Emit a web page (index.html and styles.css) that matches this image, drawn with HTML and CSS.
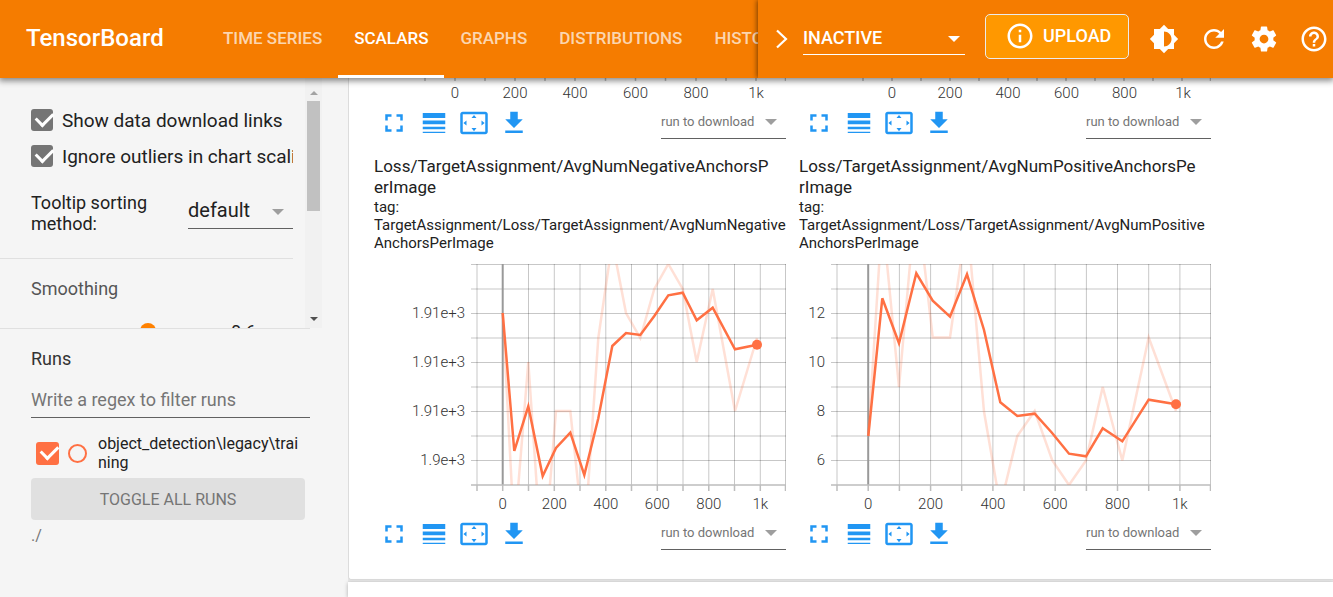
FILE: index.html
```html
<!DOCTYPE html>
<html lang="en">
<head>
<meta charset="utf-8">
<title>TensorBoard</title>
<link rel="stylesheet" href="styles.css">
</head>
<body>
<svg class="defs" aria-hidden="true">
  <symbol id="i-full" viewBox="0 0 24 24"><path d="M7 14H5v5h5v-2H7v-3zm-2-4h2V7h3V5H5v5zm12 7h-3v2h5v-5h-2v3zM14 5v2h3v3h2V5h-5z"/></symbol>
  <symbol id="i-lines" viewBox="0 0 24 24"><path d="M3 17h18v-2H3v2zm0 3h18v-1H3v1zm0-7h18v-3H3v3zm0-9v4h18V4H3z"/></symbol>
  <symbol id="i-fit" viewBox="0 0 24 24"><path d="M12.01 5.5L10 8h4l-1.99-2.5zM18 10v4l2.5-1.99L18 10zM6 10l-2.5 2.01L6 14v-4zm8 6h-4l2.01 2.5L14 16zm7-13H3c-1.1 0-2 .9-2 2v14c0 1.1.9 2 2 2h18c1.1 0 2-.9 2-2V5c0-1.1-.9-2-2-2zm0 16.01H3V4.99h18v14.02z"/></symbol>
  <symbol id="i-down" viewBox="0 0 24 24"><path d="M19 9h-4V3H9v6H5l7 7 7-7zM5 18v2h14v-2H5z"/></symbol>
</svg>

<header class="topbar">
  <h1 class="brand">TensorBoard</h1>
  <nav class="tabs">
    <a href="#timeseries" class="tab">TIME SERIES</a>
    <a href="#scalars" class="tab tab-active">SCALARS</a>
    <a href="#graphs" class="tab">GRAPHS</a>
    <a href="#distributions" class="tab">DISTRIBUTIONS</a>
    <a href="#histograms" class="tab">HISTOGRAMS</a>
  </nav>
  <div class="actions">
    <button class="next" aria-label="More tabs"><svg width="14" height="20" viewBox="0 0 14 20"><path d="M2 1.500l9 8.500-9 8.500" fill="none" stroke="#fff" stroke-width="2.200"/></svg></button>
    <div class="pick pick-inactive"><select aria-label="Inactive plugins"><option>INACTIVE</option></select></div>
    <button class="upload"><svg width="30" height="30" viewBox="0 0 24 24"><path d="M11 17h2v-6h-2v6zm1-15C6.480 2 2 6.480 2 12s4.480 10 10 10 10-4.480 10-10S17.520 2 12 2zm0 18c-4.410 0-8-3.590-8-8s3.590-8 8-8 8 3.590 8 8-3.590 8-8 8zM11 9h2V7h-2v2z"/></svg>UPLOAD</button>
    <button class="round" aria-label="Theme"><svg width="30" height="30" viewBox="0 0 24 24"><path d="M20 15.310L23.310 12 20 8.690V4h-4.690L12 .690 8.690 4H4v4.690L.690 12 4 15.310V20h4.690L12 23.310 15.310 20H20v-4.690zM12 18V6c3.310 0 6 2.690 6 6s-2.690 6-6 6z"/></svg></button>
    <button class="round" aria-label="Reload"><svg width="30" height="30" viewBox="0 0 24 24"><path d="M17.650 6.350C16.200 4.900 14.210 4 12 4c-4.420 0-7.990 3.580-7.990 8s3.570 8 7.990 8c3.730 0 6.840-2.550 7.730-6h-2.080c-.820 2.330-3.040 4-5.650 4-3.310 0-6-2.690-6-6s2.690-6 6-6c1.660 0 3.140.690 4.220 1.780L13 11h7V4l-2.350 2.350z"/></svg></button>
    <button class="round" aria-label="Settings"><svg width="30" height="30" viewBox="0 0 24 24"><path d="M19.430 12.980c.040-.320.070-.640.070-.980s-.030-.660-.070-.980l2.110-1.650c.190-.150.240-.420.120-.640l-2-3.460c-.120-.220-.390-.300-.610-.220l-2.490 1c-.520-.400-1.080-.730-1.690-.980l-.380-2.650C14.460 2.180 14.250 2 14 2h-4c-.250 0-.460.180-.490.420l-.380 2.650c-.610.250-1.170.590-1.690.980l-2.490-1c-.230-.090-.490 0-.610.220l-2 3.460c-.130.220-.070.490.120.640l2.110 1.650c-.040.320-.070.650-.070.980s.030.660.070.980l-2.110 1.650c-.190.150-.240.420-.120.640l2 3.460c.120.220.390.300.610.220l2.490-1c.520.400 1.080.730 1.690.980l.380 2.650c.030.240.240.420.490.420h4c.250 0 .460-.180.490-.420l.380-2.650c.610-.250 1.170-.590 1.690-.980l2.490 1c.230.090.490 0 .610-.220l2-3.460c.120-.220.070-.490-.120-.640l-2.110-1.650zM12 15.500c-1.930 0-3.500-1.570-3.500-3.500s1.570-3.500 3.500-3.500 3.500 1.570 3.500 3.500-1.570 3.500-3.500 3.500z"/></svg></button>
    <button class="round" aria-label="Help"><svg width="30" height="30" viewBox="0 0 24 24"><path d="M11 18h2v-2h-2v2zm1-16C6.480 2 2 6.480 2 12s4.480 10 10 10 10-4.480 10-10S17.520 2 12 2zm0 18c-4.410 0-8-3.590-8-8s3.590-8 8-8 8 3.590 8 8-3.590 8-8 8zm0-14c-2.210 0-4 1.790-4 4h2c0-1.100.900-2 2-2s2 .900 2 2c0 2-3 1.750-3 5h2c0-2.250 3-2.500 3-5 0-2.210-1.790-4-4-4z"/></svg></button>
  </div>
</header>

<div class="content">
  <aside class="sidebar">
    <div class="settings">
      <div class="options">
        <label class="check"><input type="checkbox" checked><span>Show data download links</span></label>
        <label class="check"><input type="checkbox" checked><span>Ignore outliers in chart scaling</span></label>
        <div class="tooltip-row">
          <label for="sorting">Tooltip sorting method:</label>
          <div class="pick pick-sorting"><select id="sorting"><option>default</option></select></div>
        </div>
        <div class="smoothing">
          <label for="smooth">Smoothing</label>
          <div class="smoothing-row">
            <input id="smooth" type="range" min="0" max="1" step="0.1" value="0.6">
            <input class="smooth-value" type="text" value="0.6" aria-label="Smoothing value">
          </div>
        </div>
      </div>
      <div class="scrollbar" aria-hidden="true"><i class="arrow-up"></i><i class="thumb"></i><i class="arrow-down"></i></div>
    </div>
    <div class="runs">
      <label class="runs-title" for="regex">Runs</label>
      <input id="regex" class="regex" type="text" placeholder="Write a regex to filter runs">
      <div class="run">
        <input id="run" type="checkbox" checked>
        <input class="only" type="radio" aria-label="Show only this run">
        <label for="run">object_detection\legacy\training</label>
      </div>
      <button class="toggle">TOGGLE ALL RUNS</button>
      <div class="path">./</div>
    </div>
  </aside>

  <main class="board">
    <section class="panel">
      <article class="card">
        <svg class="axis" viewBox="0 0 412 26">
          <path class="tick" d="M51 0v3M81 0v3M111 0v3M141 0v3M171 0v3M201 0v3M231.500 0v3M261.500 0v3M291.500 0v3M322 0v3M352 0v3M382 0v3M411.500 0v3"/>
          <g class="x-labels"><text x="81" y="20">0</text><text x="141" y="20">200</text><text x="201" y="20">400</text><text x="261.500" y="20">600</text><text x="322" y="20">800</text><text x="382" y="20">1k</text></g>
        </svg>
        <div class="tools">
          <button aria-label="Toggle fullscreen"><svg><use href="#i-full"/></svg></button>
          <button aria-label="Toggle log scale"><svg><use href="#i-lines"/></svg></button>
          <button aria-label="Fit domain to data"><svg><use href="#i-fit"/></svg></button>
          <button aria-label="Download chart"><svg><use href="#i-down"/></svg></button>
          <div class="pick pick-run"><select aria-label="run to download"><option>run to download</option></select></div>
        </div>
      </article>
      <article class="card">
        <svg class="axis" viewBox="0 0 412 26">
          <path class="tick" d="M64 0v3M93 0v3M122 0v3M151 0v3M180 0v3M209 0v3M238 0v3M267 0v3M296 0v3M325 0v3M354 0v3M383 0v3M411.500 0v3"/>
          <g class="x-labels"><text x="93" y="20">0</text><text x="151" y="20">200</text><text x="209" y="20">400</text><text x="267.500" y="20">600</text><text x="325.500" y="20">800</text><text x="384" y="20">1k</text></g>
        </svg>
        <div class="tools">
          <button aria-label="Toggle fullscreen"><svg><use href="#i-full"/></svg></button>
          <button aria-label="Toggle log scale"><svg><use href="#i-lines"/></svg></button>
          <button aria-label="Fit domain to data"><svg><use href="#i-fit"/></svg></button>
          <button aria-label="Download chart"><svg><use href="#i-down"/></svg></button>
          <div class="pick pick-run"><select aria-label="run to download"><option>run to download</option></select></div>
        </div>
      </article>

      <article class="card">
        <h2>Loss/TargetAssignment/AvgNumNegativeAnchorsPerImage</h2>
        <p class="tag">tag: <span>TargetAssignment/Loss/TargetAssignment/AvgNumNegativeAnchorsPerImage</span></p>
        <svg class="chart" viewBox="0 0 412 251">
          <defs><clipPath id="clip-a"><rect x="97" y="0" width="315" height="221"/></clipPath></defs>
          <path class="grid" d="M97 .500h315M97 25h315M97 49.500h315M97 74h315M97 98.500h315M97 123h315M97 147.500h315M97 172h315M97 196.500h315M103 0v221M154.500 0v221M180.300 0v221M206 0v221M231.800 0v221M257.500 0v221M283.300 0v221M309 0v221M334.800 0v221M360.500 0v221M386.300 0v221M411.500 0v221"/>
          <path class="zero" d="M128.700 0v221"/>
          <path class="tick" d="M97 221h315M103 221v6M128.700 221v6M154.500 221v6M180.300 221v6M206 221v6M231.800 221v6M257.500 221v6M283.300 221v6M309 221v6M334.800 221v6M360.500 221v6M386.300 221v6M411.500 221v6"/>
          <g clip-path="url(#clip-a)">
            <path class="raw" d="M128.700 49L140.300 271 154.300 98 168.700 309 182 147H196.300L210.300 278 224.300 74 238.300-22 252 49 266.300 74 280.300 25 294.300 0 308.700 25 322.700 98 338.700 25 361 147 383 74"/>
            <path class="smooth" d="M128.700 49L140.300 187 154.300 142.300 168.700 212 182 184 196.300 168.700 210.300 211 224.300 154.300 238.300 82 252 69 266.300 71 280.300 52 294.300 31.300 308.700 28.700 322.700 56.300 338.700 43.700 361 85.300 383 80.700"/>
          </g>
          <circle class="dot" cx="383" cy="80.700" r="5"/>
          <g class="y-labels"><text x="91" y="54">1.91e+3</text><text x="91" y="103">1.91e+3</text><text x="91" y="152">1.91e+3</text><text x="91" y="201">1.9e+3</text></g>
          <g class="x-labels"><text x="128.700" y="245">0</text><text x="180.300" y="245">200</text><text x="231.800" y="245">400</text><text x="283.300" y="245">600</text><text x="334.800" y="245">800</text><text x="386.300" y="245">1k</text></g>
        </svg>
        <div class="tools">
          <button aria-label="Toggle fullscreen"><svg><use href="#i-full"/></svg></button>
          <button aria-label="Toggle log scale"><svg><use href="#i-lines"/></svg></button>
          <button aria-label="Fit domain to data"><svg><use href="#i-fit"/></svg></button>
          <button aria-label="Download chart"><svg><use href="#i-down"/></svg></button>
          <div class="pick pick-run"><select aria-label="run to download"><option>run to download</option></select></div>
        </div>
      </article>
      <article class="card">
        <h2>Loss/TargetAssignment/AvgNumPositiveAnchorsPerImage</h2>
        <p class="tag">tag: <span>TargetAssignment/Loss/TargetAssignment/AvgNumPositiveAnchorsPerImage</span></p>
        <svg class="chart" viewBox="0 0 412 251">
          <defs><clipPath id="clip-b"><rect x="32" y="0" width="380" height="221"/></clipPath></defs>
          <path class="grid" d="M32 .500h380M32 25h380M32 49.500h380M32 74h380M32 98.500h380M32 123h380M32 147.500h380M32 172h380M32 196.500h380M38 0v221M100.400 0v221M131.600 0v221M162.700 0v221M193.900 0v221M225.100 0v221M256.200 0v221M287.400 0v221M318.500 0v221M349.700 0v221M380.900 0v221M411.500 0v221"/>
          <path class="zero" d="M69.200 0v221"/>
          <path class="tick" d="M32 221h380M38 221v6M69.200 221v6M100.400 221v6M131.600 221v6M162.700 221v6M193.900 221v6M225.100 221v6M256.200 221v6M287.400 221v6M318.500 221v6M349.700 221v6M380.900 221v6M411.500 221v6"/>
          <g clip-path="url(#clip-b)">
            <path class="raw" d="M69.300 172L83.300-49 100 123 117.300-70 133.700 73.500H151L168-45 185 147.500 201.300 242 218.300 172 235.700 147 253.300 196.500 270 221 287 196.500 303.700 123 323.300 196.500 349.700 73.500 377 147"/>
            <path class="smooth" d="M69.300 172L83.300 34.300 100 79.300 117.300 9.300 133.700 36.700 151 52.700 168 10.300 185 66 201.300 138.300 218.300 152 235.700 149.700 252.700 168.500 270 189.700 287 192.300 303.700 164.300 323.300 177.300 349.700 135.700 377 140.300"/>
          </g>
          <circle class="dot" cx="377" cy="140.300" r="5"/>
          <g class="y-labels"><text x="26" y="54">12</text><text x="26" y="103">10</text><text x="26" y="152">8</text><text x="26" y="201">6</text></g>
          <g class="x-labels"><text x="69.200" y="245">0</text><text x="131.600" y="245">200</text><text x="193.900" y="245">400</text><text x="256.200" y="245">600</text><text x="318.500" y="245">800</text><text x="380.900" y="245">1k</text></g>
        </svg>
        <div class="tools">
          <button aria-label="Toggle fullscreen"><svg><use href="#i-full"/></svg></button>
          <button aria-label="Toggle log scale"><svg><use href="#i-lines"/></svg></button>
          <button aria-label="Fit domain to data"><svg><use href="#i-fit"/></svg></button>
          <button aria-label="Download chart"><svg><use href="#i-down"/></svg></button>
          <div class="pick pick-run"><select aria-label="run to download"><option>run to download</option></select></div>
        </div>
      </article>
    </section>
    <section class="panel panel-next"></section>
  </main>
</div>
</body>
</html>
```

FILE: styles.css
```css
* { box-sizing: border-box; }
body {
  margin: 0;
  height: 100vh;
  display: flex;
  flex-direction: column;
  overflow: hidden;
  background: #f5f5f5;
  color: #212121;
  font-family: Roboto, "Liberation Sans", sans-serif;
}
button, input, select { font: inherit; color: inherit; margin: 0; }
button { border: 0; padding: 0; background: none; cursor: pointer; }
.defs { display: none; }

/* Top bar */
.topbar {
  position: relative;
  z-index: 2;
  display: flex;
  flex: none;
  height: 78px;
  background: #f57c00;
  color: #fff;
  box-shadow: 0 2px 6px 1px rgba(0, 0, 0, .45);
}
.brand {
  flex: none;
  width: 207px;
  margin: 0;
  padding-left: 26px;
  font-size: 24px;
  font-weight: 500;
  line-height: 77px;
}
.tabs { display: flex; flex: 1; min-width: 0; overflow: hidden; }
.tab {
  flex: none;
  padding: 0 16px;
  border-bottom: 3px solid transparent;
  color: rgba(255, 255, 255, .7);
  font-size: 17px;
  font-weight: 500;
  line-height: 76px;
  text-decoration: none;
}
.tab-active { color: #fff; border-color: #fff; }
.actions {
  position: relative;
  display: flex;
  flex: none;
  align-items: center;
  padding-left: 17px;
  background: #f57c00;
  box-shadow: -1px 0 5px rgba(0, 0, 0, .5);
  clip-path: inset(0 0 0 -12px);
}
.actions svg { display: block; fill: #fff; }
.next { width: 28px; }
.upload {
  display: flex;
  align-items: center;
  align-self: flex-start;
  gap: 8px;
  width: 144px;
  height: 45px;
  margin: 14px 10px 0 20px;
  padding: 0 0 2px 19px;
  border: 1px solid #ebebeb;
  border-radius: 5px;
  background: #ff9800;
  color: #fff;
  font-size: 18px;
  font-weight: 500;
}
.round { display: flex; justify-content: center; width: 50px; }
.actions .round:last-child { margin-right: -6px; }

/* Drop-downs */
.pick { position: relative; flex: none; border-bottom: 1px solid #616161; }
.pick select {
  display: block;
  width: 100%;
  height: 100%;
  padding: 0;
  border: 0;
  background: none;
  appearance: none;
}
.pick::after {
  content: "";
  position: absolute;
  top: 50%;
  right: 9px;
  margin-top: -2px;
  border: 6px solid transparent;
  border-top-color: #9e9e9e;
  border-bottom: 0;
  pointer-events: none;
}
.pick-inactive { width: 162px; height: 34px; margin-bottom: 2px; border-color: #fff; font-size: 18px; font-weight: 500; }
.pick-inactive::after { right: 5px; border-top-color: #fff; }
.pick-sorting { width: 105px; height: 36px; font-size: 20px; }
.pick-run { width: 125px; height: 35px; margin-left: auto; align-self: flex-start; color: #757575; font-size: 13px; }

/* Sidebar */
.content { display: flex; flex: 1; min-height: 0; }
.sidebar { flex: none; width: 348px; }
.settings { display: flex; width: 322px; height: 250px; overflow: hidden; }
.options { width: 293px; padding-top: 24px; }
.check {
  display: flex;
  align-items: center;
  gap: 9px;
  height: 36px;
  padding-left: 31px;
  overflow: hidden;
  font-size: 19px;
  white-space: nowrap;
}
input[type="checkbox"] {
  position: relative;
  flex: none;
  width: 22px;
  height: 22px;
  border-radius: 3px;
  background: #757575;
  appearance: none;
}
input[type="checkbox"]::after {
  content: "";
  position: absolute;
  left: 8px;
  top: 0;
  width: 8px;
  height: 14px;
  border: solid #fff;
  border-width: 0 3px 3px 0;
  transform: rotate(45deg);
}
.tooltip-row {
  display: flex;
  justify-content: space-between;
  height: 85px;
  padding: 18px 0 0 31px;
  border-bottom: 1px solid #e0e0e0;
  font-size: 18px;
  line-height: 21px;
}
.tooltip-row label { width: 130px; }
.tooltip-row .pick { margin-top: 1px; }
.smoothing { padding: 19px 0 0 31px; color: #555; font-size: 18px; line-height: 21px; }
.smoothing-row { display: flex; align-items: center; height: 40px; margin-top: 12px; }
#smooth { width: 197px; height: 20px; background: none; appearance: none; }
#smooth::-webkit-slider-runnable-track { height: 3px; background: #ffb74d; }
#smooth::-webkit-slider-thumb {
  width: 16px;
  height: 16px;
  margin-top: -7px;
  border-radius: 50%;
  background: #ff8100;
  appearance: none;
}
.smooth-value { width: 60px; padding: 0 3px; border: 0; background: none; color: #212121; }
.scrollbar {
  display: flex;
  flex-direction: column;
  align-items: center;
  width: 17px;
  margin-left: auto;
  padding: 13px 0 7px;
  background: #f1f1f1;
}
.arrow-up { border: 4px solid transparent; border-bottom-color: #a3a3a3; border-top: 0; }
.arrow-down { margin-top: auto; border: 4px solid transparent; border-top-color: #505050; border-bottom: 0; }
.thumb { width: 13px; height: 110px; margin-top: 6px; background: #c1c1c1; }

.runs { width: 310px; padding: 20px 0 0 31px; border-top: 1px solid #e0e0e0; font-size: 18px; }
.runs-title { display: block; line-height: 20px; color: #333; }
.regex {
  display: block;
  width: 100%;
  height: 36px;
  margin-top: 13px;
  padding: 0;
  border: 0;
  border-bottom: 1px solid #616161;
  background: none;
  outline: 0;
}
.regex::placeholder { color: #757575; }
.run {
  display: flex;
  align-items: center;
  gap: 9px;
  margin: 16px 0 6px;
  padding-left: 5px;
  font-size: 16px;
  line-height: 19px;
}
.run label { width: 204px; margin-left: 2px; word-break: break-all; }
.run input[type="checkbox"] { width: 23px; height: 23px; background: #ff7043; }
.only {
  flex: none;
  width: 19px;
  height: 19px;
  border: 2px solid #ff7043;
  border-radius: 50%;
  appearance: none;
}
.toggle {
  display: block;
  width: 274px;
  height: 42px;
  border-radius: 4px;
  background: #e0e0e0;
  color: #757575;
  font-size: 16px;
}
.path { margin-top: 6px; color: #757575; font-size: 16px; line-height: 20px; }

/* Charts */
.board { display: flex; flex: 1; flex-direction: column; min-width: 0; background: #e8e8e8; }
.panel {
  display: flex;
  flex: none;
  flex-wrap: wrap;
  gap: 14px 13px;
  padding: 0 25px 26px;
  border: solid #dcdcdc;
  border-width: 0 0 1px 1px;
  border-radius: 0 0 0 3px;
  background: #fff;
}
.panel-next { flex: 1; margin-top: 2px; padding: 0; border: 0; border-radius: 0; box-shadow: 0 1px 4px rgba(0, 0, 0, .3); }
.card { width: 412px; }
.card h2 { margin: 0; padding-right: 11px; font-size: 17px; font-weight: 400; line-height: 21px; word-break: break-all; }
.tag { margin: 0 0 12px; font-size: 15px; line-height: 18px; }
.tag span { display: block; word-break: break-all; }
.axis, .chart { display: block; width: 100%; }
.grid { fill: none; stroke: #000; stroke-opacity: .22; }
.zero { stroke: #999; stroke-width: 2; }
.tick { fill: none; stroke: #bdbdbd; stroke-width: 1.500; }
.raw, .smooth { fill: none; stroke: #ff7043; stroke-width: 2.500; }
.raw { stroke-opacity: .22; }
.dot { fill: #ff7043; }
.x-labels, .y-labels { fill: #333; font-size: 15px; font-weight: 300; text-anchor: middle; }
.y-labels { text-anchor: end; }
.tools { display: flex; height: 38px; }
.tools button { display: flex; align-items: center; justify-content: center; width: 40px; }
.tools svg { width: 30px; height: 30px; fill: #2196f3; }
```
